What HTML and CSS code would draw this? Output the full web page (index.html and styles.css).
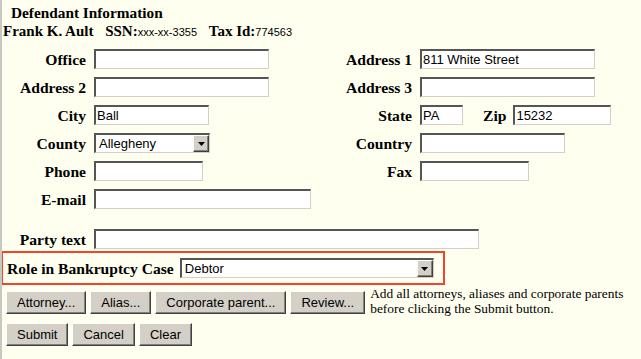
FILE: index.html
```html
<!DOCTYPE html>
<html lang="en">
<head>
    <meta charset="UTF-8">
    <title>Defendant Information</title>
    <link rel="stylesheet" href="styles.css">
</head>
<body>
    <div class="page">
        <h3 class="title">Defendant Information</h3>
        <div class="party-line">
            <b>Frank K. Ault</b>
            <span class="id-field"><b>SSN:</b><span class="small">xxx-xx-3355</span></span>
            <span class="id-field"><b>Tax Id:</b><span class="small">774563</span></span>
        </div>

        <form class="form-grid" action="#" method="post">
            <label class="lbl" for="office">Office</label>
            <input class="txt w-175" type="text" id="office">
            <label class="lbl" for="addr1">Address 1</label>
            <input class="txt w-175" type="text" id="addr1" value="811 White Street">

            <label class="lbl" for="addr2">Address 2</label>
            <input class="txt w-175" type="text" id="addr2">
            <label class="lbl" for="addr3">Address 3</label>
            <input class="txt w-175" type="text" id="addr3">

            <label class="lbl" for="city">City</label>
            <input class="txt w-115" type="text" id="city" value="Ball">
            <label class="lbl" for="state">State</label>
            <div class="state-zip">
                <input class="txt w-43" type="text" id="state" value="PA">
                <label class="lbl zip-lbl" for="zip">Zip</label>
                <input class="txt w-98" type="text" id="zip" value="15232">
            </div>

            <label class="lbl">County</label>
            <div class="select w-116">
                <span class="select-value">Allegheny</span>
                <span class="select-btn"><svg width="7" height="4" viewBox="0 0 7 4"><path d="M0 0h7L3.5 4z" fill="#000"/></svg></span>
            </div>
            <label class="lbl" for="country">Country</label>
            <input class="txt w-145" type="text" id="country">

            <label class="lbl" for="phone">Phone</label>
            <input class="txt w-109" type="text" id="phone">
            <label class="lbl" for="fax">Fax</label>
            <input class="txt w-109" type="text" id="fax">

            <label class="lbl" for="email">E-mail</label>
            <input class="txt w-217" type="text" id="email">

            <div class="spacer"></div>

            <label class="lbl" for="partytext">Party text</label>
            <input class="txt w-385 wide" type="text" id="partytext">
        </form>

        <div class="role-box">
            <span class="role-lbl">Role in Bankruptcy Case</span>
            <div class="select w-254">
                <span class="select-value">Debtor</span>
                <span class="select-btn"><svg width="7" height="4" viewBox="0 0 7 4"><path d="M0 0h7L3.5 4z" fill="#000"/></svg></span>
            </div>
        </div>

        <div class="btn-row">
            <button class="btn">Attorney...</button>
            <button class="btn">Alias...</button>
            <button class="btn">Corporate parent...</button>
            <button class="btn">Review...</button>
            <p class="note">Add all attorneys, aliases and corporate parents<br>before clicking the Submit button.</p>
        </div>

        <div class="btn-row submit-row">
            <button class="btn">Submit</button>
            <button class="btn">Cancel</button>
            <button class="btn">Clear</button>
        </div>
    </div>
</body>
</html>
```
FILE: styles.css
```css
html {
    background: #fffff0;
}

body {
    margin: 0;
    min-height: 100vh;
    border-left: 2px solid #c8c8c0;
    font-family: 'Liberation Serif', 'Times New Roman', serif;
    font-size: 15px;
    color: #000;
}

.page {
    padding-top: 4px;
}

.title {
    margin: 0 0 2px 0;
    padding-left: 9px;
    font-size: 15.3px;
    line-height: 17px;
}

.party-line {
    padding-left: 1px;
    line-height: 17px;
    margin-bottom: 8px;
    white-space: nowrap;
}

.id-field {
    margin-left: 8px;
}

.small {
    font-family: 'Liberation Sans', Arial, sans-serif;
    font-size: 11px;
}

.form-grid {
    display: grid;
    grid-template-columns: 84px 236px 74px 220px;
    column-gap: 8px;
    row-gap: 8px;
    align-items: center;
    margin: 0;
}

.lbl {
    text-align: right;
    font-weight: bold;
    font-size: 15.6px;
    line-height: 17px;
}

.txt {
    justify-self: start;
    height: 20px;
    box-sizing: border-box;
    margin: 0;
    padding: 0 1px;
    border-style: solid;
    border-width: 2px 1px 1px 2px;
    border-color: #555 #d4d0c8 #d4d0c8 #555;
    background: #fff;
    font-family: 'Liberation Sans', Arial, sans-serif;
    font-size: 13px;
    color: #000;
    outline: none;
}

.w-43 { width: 43px; }
.w-98 { width: 98px; }
.w-109 { width: 109px; }
.w-115 { width: 115px; }
.w-116 { width: 116px; }
.w-145 { width: 145px; }
.w-175 { width: 175px; }
.w-217 { width: 217px; }
.w-254 { width: 254px; }
.w-385 { width: 385px; }

.wide {
    grid-column: 2 / -1;
}

.state-zip {
    display: flex;
    align-items: center;
}

.zip-lbl {
    margin: 0 7px 0 20px;
}

.spacer {
    grid-column: 1 / -1;
    height: 4px;
}

.select {
    justify-self: start;
    display: flex;
    height: 20px;
    box-sizing: border-box;
    border-style: solid;
    border-width: 2px 1px 1px 2px;
    border-color: #555 #d4d0c8 #d4d0c8 #555;
    background: #fff;
    font-family: 'Liberation Sans', Arial, sans-serif;
    font-size: 13px;
}

.select-value {
    flex: 1;
    padding-left: 3px;
    line-height: 17px;
}

.select-btn {
    width: 16px;
    box-sizing: border-box;
    display: flex;
    align-items: center;
    justify-content: center;
    background: #d4d0c8;
    border: 1px solid;
    border-color: #fff #404040 #404040 #fff;
    box-shadow: inset -1px -1px #808080;
}

.role-box {
    display: flex;
    align-items: center;
    width: max-content;
    margin: 2px 0 0 -1px;
    padding: 5px 9px 5px 4px;
    border: 2px solid #f4432c;
}

.role-lbl {
    font-weight: bold;
    font-size: 15.6px;
    margin-right: 6px;
    line-height: 17px;
}

.btn-row {
    display: flex;
    align-items: flex-start;
    gap: 4px;
    padding-left: 4px;
    margin-top: 6px;
}

.submit-row {
    margin-top: 7px;
}

.btn {
    height: 23px;
    margin: 0;
    padding: 0 10px;
    background: #d4d0c8;
    border: 1px solid;
    border-color: #fff #404040 #404040 #fff;
    box-shadow: inset -1px -1px #808080;
    font-family: 'Liberation Sans', Arial, sans-serif;
    font-size: 13px;
    color: #000;
}

.note {
    margin: -5px 0 0 1px;
    font-size: 13.4px;
    line-height: 15px;
}
```
